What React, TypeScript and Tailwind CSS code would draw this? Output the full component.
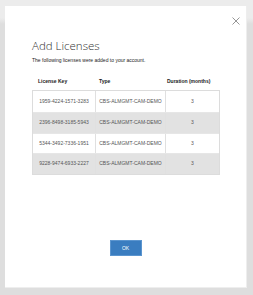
import React from "react";

const rows = [
  { key: "1959-4224-1571-3283", type: "CBS-ALMGMT-CAM-DEMO", dur: "3" },
  { key: "2396-8498-3185-5943", type: "CBS-ALMGMT-CAM-DEMO", dur: "3" },
  { key: "5344-3492-7336-1951", type: "CBS-ALMGMT-CAM-DEMO", dur: "3" },
  { key: "9228-9474-6933-2227", type: "CBS-ALMGMT-CAM-DEMO", dur: "3" },
];

export default function App() {
  return (
    <div className="w-[253px] h-[295px] bg-[linear-gradient(to_bottom,#ececec_0px,#ececec_18px,#dedede_24px,#dedede_100%)] pt-[6px] pl-[5px] font-['Liberation_Sans',Arial,sans-serif]">
      <div className="relative w-[242px] h-[282px] bg-white border-r border-b border-[#eeeeee] flex flex-col">
        <div className="flex justify-end pt-[11px] pr-[6px]">
          <svg width="8" height="8" viewBox="0 0 8 8" className="block">
            <path d="M0.5 0.5 L7.5 7.5 M7.5 0.5 L0.5 7.5" stroke="#8a8a8a" strokeWidth="0.9" />
          </svg>
        </div>
        <div className="pl-[27px] pt-[13px]">
          <div className="font-['Open_Sans',sans-serif] font-light text-[11.5px] leading-[16px] text-[#333333]">
            Add Licenses
          </div>
          <div className="mt-[3px] text-[5px] leading-[7px] text-[#222222]">
            The following licenses were added to your account.
          </div>
          <div className="mt-[14px] w-[188px]">
            <div className="flex text-[5px] leading-[7px] font-bold text-[#222222] h-[12px]">
              <div className="w-[63px] pl-[6px]">License Key</div>
              <div className="w-[70px] pl-[4px]">Type</div>
              <div className="flex-1 pl-[2px]">Duration (months)</div>
            </div>
            <div className="border border-[#dcdcdc]">
              {rows.map((r, i) => (
                <div
                  key={r.key}
                  className={
                    "flex h-[20.75px] text-[5px] text-[#555555] " +
                    (i % 2 === 1 ? "bg-[#e2e2e2]" : "bg-white") +
                    (i > 0 ? " border-t border-[#e6e6e6]" : "")
                  }
                >
                  <div className="w-[63px] flex items-center justify-center border-r border-[#e0e0e0]">
                    {r.key}
                  </div>
                  <div className="w-[70px] flex items-center justify-center border-r border-[#e0e0e0]">
                    {r.type}
                  </div>
                  <div className="flex-1 flex items-center justify-center">{r.dur}</div>
                </div>
              ))}
            </div>
          </div>
        </div>
        <div className="flex justify-center mt-[65px]">
          <button className="w-[32px] h-[16px] bg-[#3a7dc0] border border-[#5b95cf] text-white text-[5px] leading-none flex items-center justify-center">
            OK
          </button>
        </div>
      </div>
    </div>
  );
}
